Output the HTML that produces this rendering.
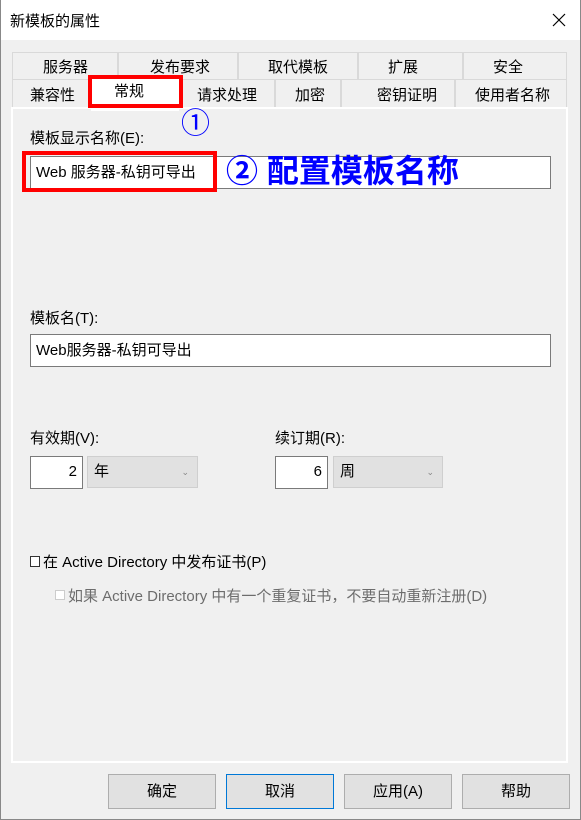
<!DOCTYPE html>
<html><head><meta charset="utf-8"><style>
*{margin:0;padding:0;box-sizing:border-box}
body{width:581px;height:820px;background:#f0f0f0;font-family:"Liberation Sans","Noto Sans CJK SC",sans-serif;font-size:15px;color:#000;position:relative;overflow:hidden}
.a{position:absolute;white-space:nowrap}
.win{position:absolute;left:0;top:0;width:581px;height:820px;border:1px solid #888;border-top:none}
.title{position:absolute;left:0;top:0;width:581px;height:40px;background:#fff}
.tab{position:absolute;height:27px;border:1px solid #d9d9d9;border-bottom:none;background:#f0f0f0}
.t{position:absolute;white-space:nowrap;font-size:15px}
.panel{position:absolute;left:11px;top:107px;width:557px;height:656px;border:2px solid #fff;background:#f0f0f0}
.inp{position:absolute;background:#fff;border:1px solid #7a7a7a;padding-left:5px;line-height:30px;font-size:15px}
.dd{position:absolute;background:#e1e1e1;border:1px solid #cfcfcf;padding-left:6px;line-height:30px}
.btn{position:absolute;top:774px;width:108px;height:35px;background:#e1e1e1;border:1px solid #adadad;text-align:center;line-height:33px}
.red{position:absolute;border:4px solid #ff0000}
.blue{color:#0000ff;font-weight:bold}
</style></head><body>
<div class="title"></div>
<div class="a" style="left:10px;top:10px;font-size:15px">新模板的属性</div>
<svg class="a" style="left:551px;top:12px" width="16" height="16"><path d="M2 2L14 14M14 2L2 14" stroke="#000" stroke-width="1.2"/></svg>

<div class="tab" style="left:12px;top:52px;width:106px"></div>
<div class="tab" style="left:118px;top:52px;width:120px"></div>
<div class="tab" style="left:238px;top:52px;width:120px"></div>
<div class="tab" style="left:358px;top:52px;width:105px"></div>
<div class="tab" style="left:463px;top:52px;width:104px"></div>
<div class="tab" style="left:12px;top:79px;width:80px;height:28px"></div>
<div class="tab" style="left:182px;top:79px;width:93px;height:28px"></div>
<div class="tab" style="left:275px;top:79px;width:66px;height:28px"></div>
<div class="tab" style="left:341px;top:79px;width:114px;height:28px"></div>
<div class="tab" style="left:455px;top:79px;width:112px;height:28px"></div>
<div class="t" style="left:43px;top:56px">服务器</div>
<div class="t" style="left:150px;top:56px">发布要求</div>
<div class="t" style="left:268px;top:56px">取代模板</div>
<div class="t" style="left:388px;top:56px">扩展</div>
<div class="t" style="left:493px;top:56px">安全</div>
<div class="t" style="left:30px;top:84px">兼容性</div>
<div class="t" style="left:197px;top:84px">请求处理</div>
<div class="t" style="left:295px;top:84px">加密</div>
<div class="t" style="left:377px;top:84px">密钥证明</div>
<div class="t" style="left:475px;top:84px">使用者名称</div>
<div class="panel"></div>
<div class="a" style="left:91px;top:79px;width:88px;height:32px;background:#fff"></div>
<div class="t" style="left:114px;top:80px">常规</div>
<div class="red" style="left:88px;top:75px;width:95px;height:33px"></div>
<div class="a blue" style="left:181px;top:100px;font-size:29px;font-weight:normal">①</div>

<div class="a" style="left:30px;top:127px">模板显示名称(E):</div>
<div class="inp" style="left:30px;top:156px;width:521px;height:33px;line-height:31px">Web 服务器-私钥可导出</div>
<div class="red" style="left:22px;top:151px;width:195px;height:41px"></div>
<div class="a blue" style="left:226px;top:151px;font-size:32px;line-height:40px">② 配置模板名称</div>

<div class="a" style="left:30px;top:307px">模板名(T):</div>
<div class="inp" style="left:30px;top:334px;width:521px;height:33px;line-height:31px">Web服务器-私钥可导出</div>

<div class="a" style="left:30px;top:427px">有效期(V):</div>
<div class="inp" style="left:30px;top:456px;width:53px;height:33px;text-align:right;padding-right:5px">2</div>
<div class="dd" style="left:87px;top:456px;width:111px;height:32px">年<span style="position:absolute;right:8px;top:0;font-size:9px;color:#888">⌄</span></div>
<div class="a" style="left:275px;top:427px">续订期(R):</div>
<div class="inp" style="left:275px;top:456px;width:53px;height:33px;text-align:right;padding-right:5px">6</div>
<div class="dd" style="left:333px;top:456px;width:110px;height:32px">周<span style="position:absolute;right:8px;top:0;font-size:9px;color:#888">⌄</span></div>

<div class="a" style="left:30px;top:556px;width:10px;height:11px;border:1px solid #333;background:#fff"></div>
<div class="a" style="left:43px;top:551px;font-size:15px">在 Active Directory 中发布证书(P)</div>
<div class="a" style="left:55px;top:590px;width:10px;height:10px;border:1px solid #ccc;background:#fff"></div>
<div class="a" style="left:68px;top:585px;color:#6d6d6d;font-size:15px">如果 Active Directory 中有一个重复证书，不要自动重新注册(D)</div>

<div class="btn" style="left:108px">确定</div>
<div class="btn" style="left:226px;border:1px solid #0078d7">取消</div>
<div class="btn" style="left:344px">应用(A)</div>
<div class="btn" style="left:462px">帮助</div>
<div class="win"></div>
</body></html>
